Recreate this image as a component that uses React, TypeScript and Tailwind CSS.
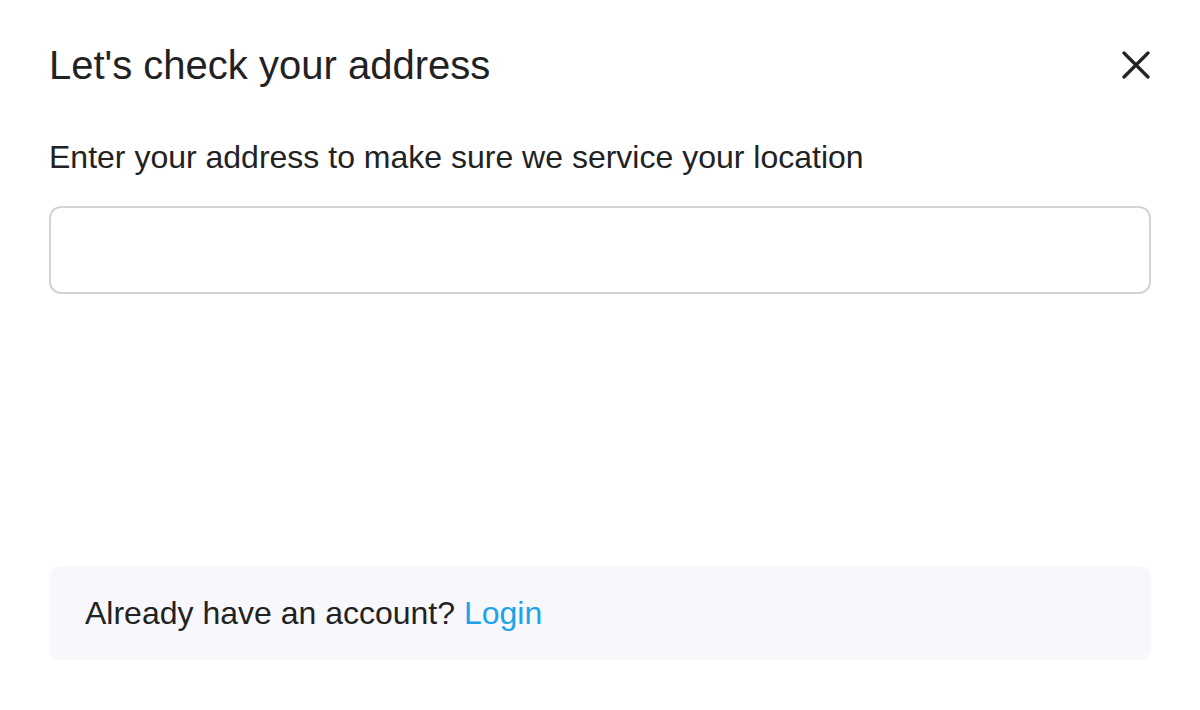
import React from "react";

export default function App() {
  return (
    <div
      className="w-[1200px] h-[710px] bg-white text-[#222222] px-[49px] flex flex-col"
      style={{ fontFamily: '"Liberation Sans", Arial, sans-serif' }}
    >
      <div className="flex items-center justify-between pt-[42px]">
        <h1 className="text-[40px] leading-[46px] font-normal">Let's check your address</h1>
        <button className="w-[36px] h-[36px] flex items-center justify-center -mr-[3px]" aria-label="Close">
          <svg width="28" height="28" viewBox="0 0 28 28" fill="none">
            <path d="M2 2L26 26M26 2L2 26" stroke="#222222" strokeWidth="3.2" strokeLinecap="round" />
          </svg>
        </button>
      </div>
      <p className="mt-[50px] text-[32px] leading-[38px]">
        Enter your address to make sure we service your location
      </p>
      <input
        type="text"
        className="mt-[30px] w-full h-[88px] border-2 border-[#d4d4d4] rounded-[12px] outline-none px-5 text-[28px]"
      />
      <div className="mt-[272px] h-[94px] rounded-[12px] bg-[#f8f8fc] flex items-center px-[36px]">
        <span className="text-[32px]">
          Already have an account? <a className="text-[#1ba3e9]" href="#">Login</a>
        </span>
      </div>
    </div>
  );
}
